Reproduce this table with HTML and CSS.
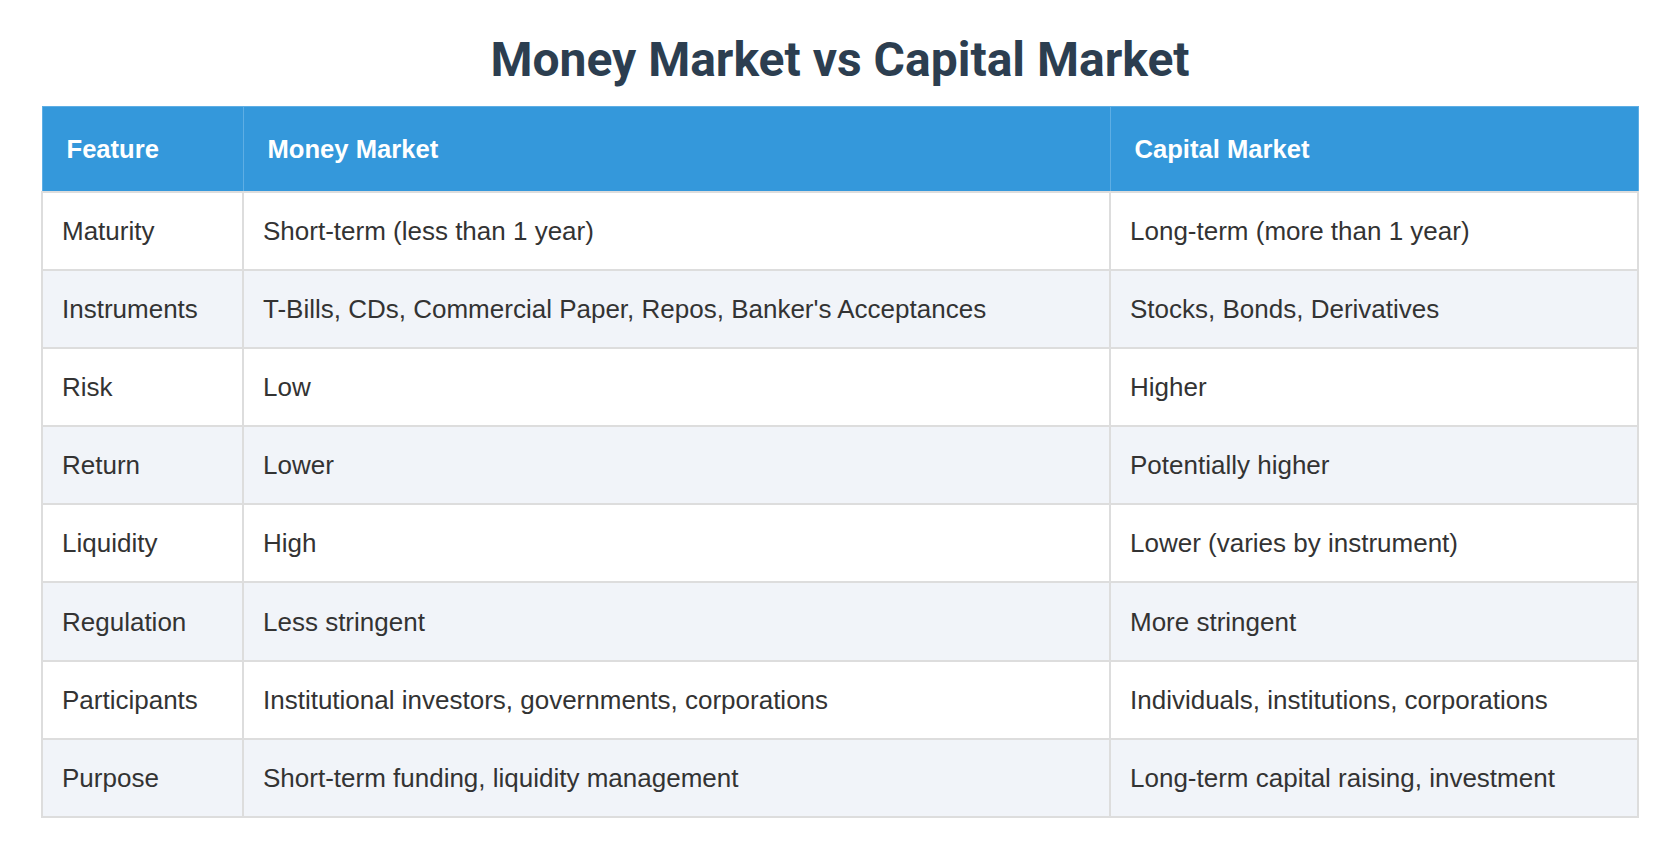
FILE: index.html
```html
<!DOCTYPE html>
<html lang="en">
<head>
<meta charset="utf-8">
<title>Money Market vs Capital Market</title>
<link rel="stylesheet" href="styles.css">
</head>
<body>
<main class="page">
  <h1 class="title">Money Market vs Capital Market</h1>
  <table class="compare">
    <colgroup>
      <col class="col-feature">
      <col class="col-money">
      <col class="col-capital">
    </colgroup>
    <thead>
      <tr><th>Feature</th><th>Money Market</th><th>Capital Market</th></tr>
    </thead>
    <tbody>
      <tr><td>Maturity</td><td>Short-term (less than 1 year)</td><td>Long-term (more than 1 year)</td></tr>
      <tr><td>Instruments</td><td>T-Bills, CDs, Commercial Paper, Repos, Banker's Acceptances</td><td>Stocks, Bonds, Derivatives</td></tr>
      <tr><td>Risk</td><td>Low</td><td>Higher</td></tr>
      <tr><td>Return</td><td>Lower</td><td>Potentially higher</td></tr>
      <tr><td>Liquidity</td><td>High</td><td>Lower (varies by instrument)</td></tr>
      <tr><td>Regulation</td><td>Less stringent</td><td>More stringent</td></tr>
      <tr><td>Participants</td><td>Institutional investors, governments, corporations</td><td>Individuals, institutions, corporations</td></tr>
      <tr><td>Purpose</td><td>Short-term funding, liquidity management</td><td>Long-term capital raising, investment</td></tr>
    </tbody>
  </table>
</main>
</body>
</html>
```

FILE: styles.css
```css
html, body {
  margin: 0;
  padding: 0;
  background: #ffffff;
}

.page {
  padding: 32px 41px 40px;
  font-family: "Liberation Sans", Arial, sans-serif;
  color: #333333;
}

.title {
  margin: 0 0 18px;
  font-family: Roboto, "Liberation Sans", Arial, sans-serif;
  font-weight: 700;
  font-size: 48px;
  line-height: 56px;
  text-align: center;
  color: #2c3e50;
}

.compare {
  width: 100%;
  border-collapse: collapse;
  table-layout: fixed;
  font-size: 26px;
  line-height: 30px;
}

.col-feature { width: 201px; }
.col-money { width: 867px; }
.col-capital { width: auto; }

.compare th {
  background: #3498db;
  color: #ffffff;
  font-weight: 700;
  font-size: 25.6px;
  text-align: left;
  padding: 27px 24px;
  border: 1px solid #5eaee4;
}

.compare td {
  padding: 23.1px 19px 23px;
  border: 2px solid #dddddd;
  background: #ffffff;
}

.compare tbody tr:nth-child(even) td {
  background: #f1f4f9;
}
```
